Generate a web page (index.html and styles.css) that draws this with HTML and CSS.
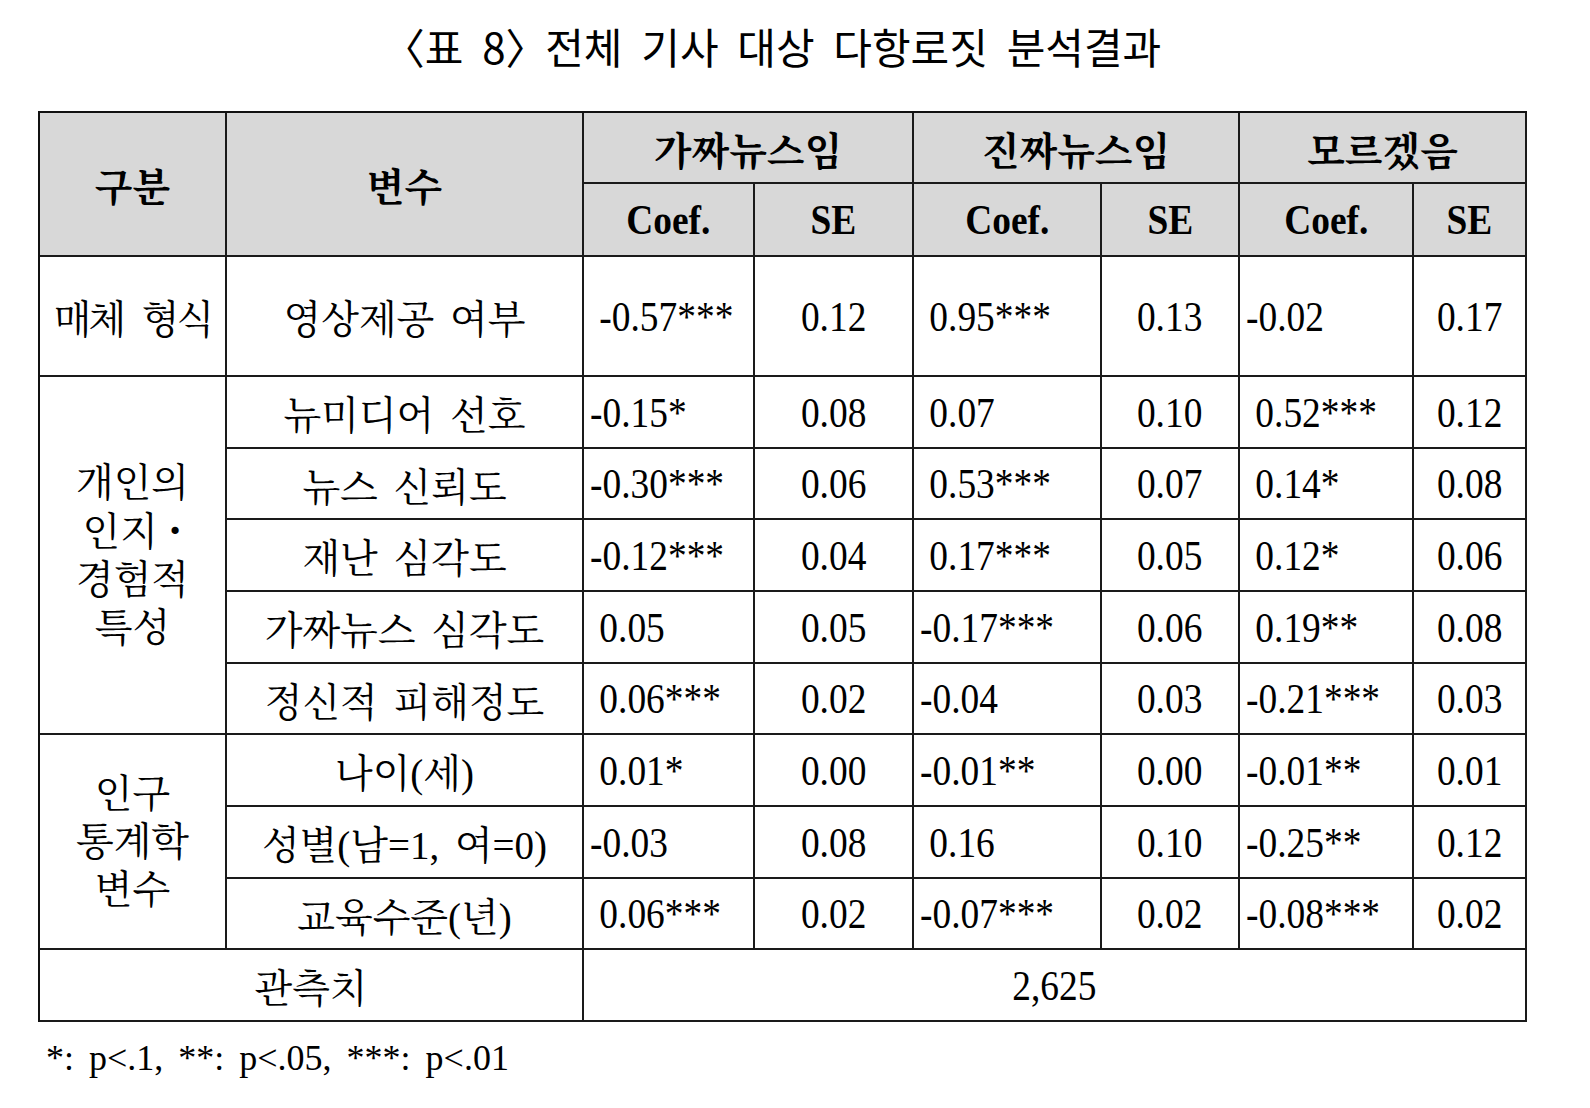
FILE: index.html
```html
<!DOCTYPE html>
<html lang="ko">
<head>
<meta charset="utf-8">
<title>표 8</title>
<link rel="stylesheet" href="styles.css">
</head>
<body>
<div class="page">
  <div class="title"><span class="title-text">〈표 8〉 전체 기사 대상 다항로짓 분석결과</span></div>
  <div class="tbl">
    <div class="c h hk r2">구분</div>
    <div class="c h hk r2">변수</div>
    <div class="c h hk c2">가짜뉴스임</div>
    <div class="c h hk c2">진짜뉴스임</div>
    <div class="c h hk c2">모르겠음</div>
    <div class="c h"><span class="n b">Coef.</span></div>
    <div class="c h"><span class="n b">SE</span></div>
    <div class="c h"><span class="n b">Coef.</span></div>
    <div class="c h"><span class="n b">SE</span></div>
    <div class="c h"><span class="n b">Coef.</span></div>
    <div class="c h"><span class="n b">SE</span></div>

    <div class="c kt tight">매체 형식</div>
    <div class="c kt">영상제공 여부</div>
    <div class="c l"><span class="n">&nbsp;-0.57***</span></div>
    <div class="c"><span class="n">0.12</span></div>
    <div class="c l"><span class="n">&nbsp;0.95***</span></div>
    <div class="c"><span class="n">0.13</span></div>
    <div class="c l"><span class="n">-0.02</span></div>
    <div class="c"><span class="n">0.17</span></div>

    <div class="c r5"><div class="stack">개인의<br>인지 <span class="dot">·</span><br>경험적<br>특성</div></div>
    <div class="c kt">뉴미디어 선호</div>
    <div class="c l"><span class="n">-0.15*</span></div>
    <div class="c"><span class="n">0.08</span></div>
    <div class="c l"><span class="n">&nbsp;0.07</span></div>
    <div class="c"><span class="n">0.10</span></div>
    <div class="c l"><span class="n">&nbsp;0.52***</span></div>
    <div class="c"><span class="n">0.12</span></div>

    <div class="c kt">뉴스 신뢰도</div>
    <div class="c l"><span class="n">-0.30***</span></div>
    <div class="c"><span class="n">0.06</span></div>
    <div class="c l"><span class="n">&nbsp;0.53***</span></div>
    <div class="c"><span class="n">0.07</span></div>
    <div class="c l"><span class="n">&nbsp;0.14*</span></div>
    <div class="c"><span class="n">0.08</span></div>

    <div class="c kt">재난 심각도</div>
    <div class="c l"><span class="n">-0.12***</span></div>
    <div class="c"><span class="n">0.04</span></div>
    <div class="c l"><span class="n">&nbsp;0.17***</span></div>
    <div class="c"><span class="n">0.05</span></div>
    <div class="c l"><span class="n">&nbsp;0.12*</span></div>
    <div class="c"><span class="n">0.06</span></div>

    <div class="c kt">가짜뉴스 심각도</div>
    <div class="c l"><span class="n">&nbsp;0.05</span></div>
    <div class="c"><span class="n">0.05</span></div>
    <div class="c l"><span class="n">-0.17***</span></div>
    <div class="c"><span class="n">0.06</span></div>
    <div class="c l"><span class="n">&nbsp;0.19**</span></div>
    <div class="c"><span class="n">0.08</span></div>

    <div class="c kt">정신적 피해정도</div>
    <div class="c l"><span class="n">&nbsp;0.06***</span></div>
    <div class="c"><span class="n">0.02</span></div>
    <div class="c l"><span class="n">-0.04</span></div>
    <div class="c"><span class="n">0.03</span></div>
    <div class="c l"><span class="n">-0.21***</span></div>
    <div class="c"><span class="n">0.03</span></div>

    <div class="c r3"><div class="stack">인구<br>통계학<br>변수</div></div>
    <div class="c kt">나이(세)</div>
    <div class="c l"><span class="n">&nbsp;0.01*</span></div>
    <div class="c"><span class="n">0.00</span></div>
    <div class="c l"><span class="n">-0.01**</span></div>
    <div class="c"><span class="n">0.00</span></div>
    <div class="c l"><span class="n">-0.01**</span></div>
    <div class="c"><span class="n">0.01</span></div>

    <div class="c kt">성별(남=1, 여=0)</div>
    <div class="c l"><span class="n">-0.03</span></div>
    <div class="c"><span class="n">0.08</span></div>
    <div class="c l"><span class="n">&nbsp;0.16</span></div>
    <div class="c"><span class="n">0.10</span></div>
    <div class="c l"><span class="n">-0.25**</span></div>
    <div class="c"><span class="n">0.12</span></div>

    <div class="c kt">교육수준(년)</div>
    <div class="c l"><span class="n">&nbsp;0.06***</span></div>
    <div class="c"><span class="n">0.02</span></div>
    <div class="c l"><span class="n">-0.07***</span></div>
    <div class="c"><span class="n">0.02</span></div>
    <div class="c l"><span class="n">-0.08***</span></div>
    <div class="c"><span class="n">0.02</span></div>

    <div class="c c2 kt">관측치</div>
    <div class="c c6"><span class="n">2,625</span></div>
  </div>
  <div class="note">*: p&lt;.1, **: p&lt;.05, ***: p&lt;.01</div>
</div>
</body>
</html>
```
FILE: styles.css
```css
body {
  margin: 0;
  background: #ffffff;
  color: #000000;
}

.page {
  width: 1590px;
}

.title {
  margin-left: 38px;
  width: 1489px;
  height: 111px;
  box-sizing: border-box;
  padding-top: 15px;
  text-align: center;
  line-height: 62px;
  font-family: "Noto Sans CJK KR", sans-serif;
  font-size: 42px;
  font-weight: 400;
}

.title-text {
  display: inline-block;
  white-space: nowrap;
  word-spacing: 7px;
  font-feature-settings: "halt" 1;
}

.tbl {
  display: grid;
  margin-left: 38px;
  width: 1489px;
  box-sizing: border-box;
  border-left: 2px solid #111111;
  border-top: 2px solid #111111;
  grid-template-columns: 187px 357px 171px 159px 188px 138px 174px 113px;
  grid-template-rows: 71px 73px 120px 72px 71px 72px 72px 71px 72px 72px 71px 72px;
}

.c {
  box-sizing: border-box;
  border-right: 2px solid #1a1a1a;
  border-bottom: 2px solid #1a1a1a;
  display: flex;
  align-items: center;
  justify-content: center;
  text-align: center;
  font-family: "Liberation Serif", "Noto Serif CJK KR", "Noto Sans CJK KR", serif;
  font-size: 39px;
  white-space: nowrap;
}

.h {
  background: #d8d8d8;
}

.hk {
  font-family: "Noto Serif CJK KR", "Noto Sans CJK KR", serif;
  font-weight: 700;
  font-size: 39px;
}

.r2 { grid-row: span 2; }
.r3 { grid-row: span 3; }
.r5 { grid-row: span 5; }
.c2 { grid-column: span 2; }
.c6 { grid-column: span 6; }

.n {
  display: inline-block;
  font-family: "Liberation Serif", serif;
  font-size: 43px;
  transform: scaleX(0.87);
  transform-origin: center center;
}

.b {
  font-weight: 700;
}

.l {
  justify-content: flex-start;
  padding-left: 6px;
}

.l .n {
  transform-origin: left center;
}

.kt {
  word-spacing: 6px;
}

.tight {
  letter-spacing: -3px;
  word-spacing: 12px;
}

.stack {
  line-height: 48px;
  text-align: center;
}

.dot {
  font-weight: 700;
  font-size: 44px;
}

.note {
  margin: 15px 0 0 46px;
  font-family: "Liberation Serif", serif;
  font-size: 36px;
  word-spacing: 6px;
}
```
